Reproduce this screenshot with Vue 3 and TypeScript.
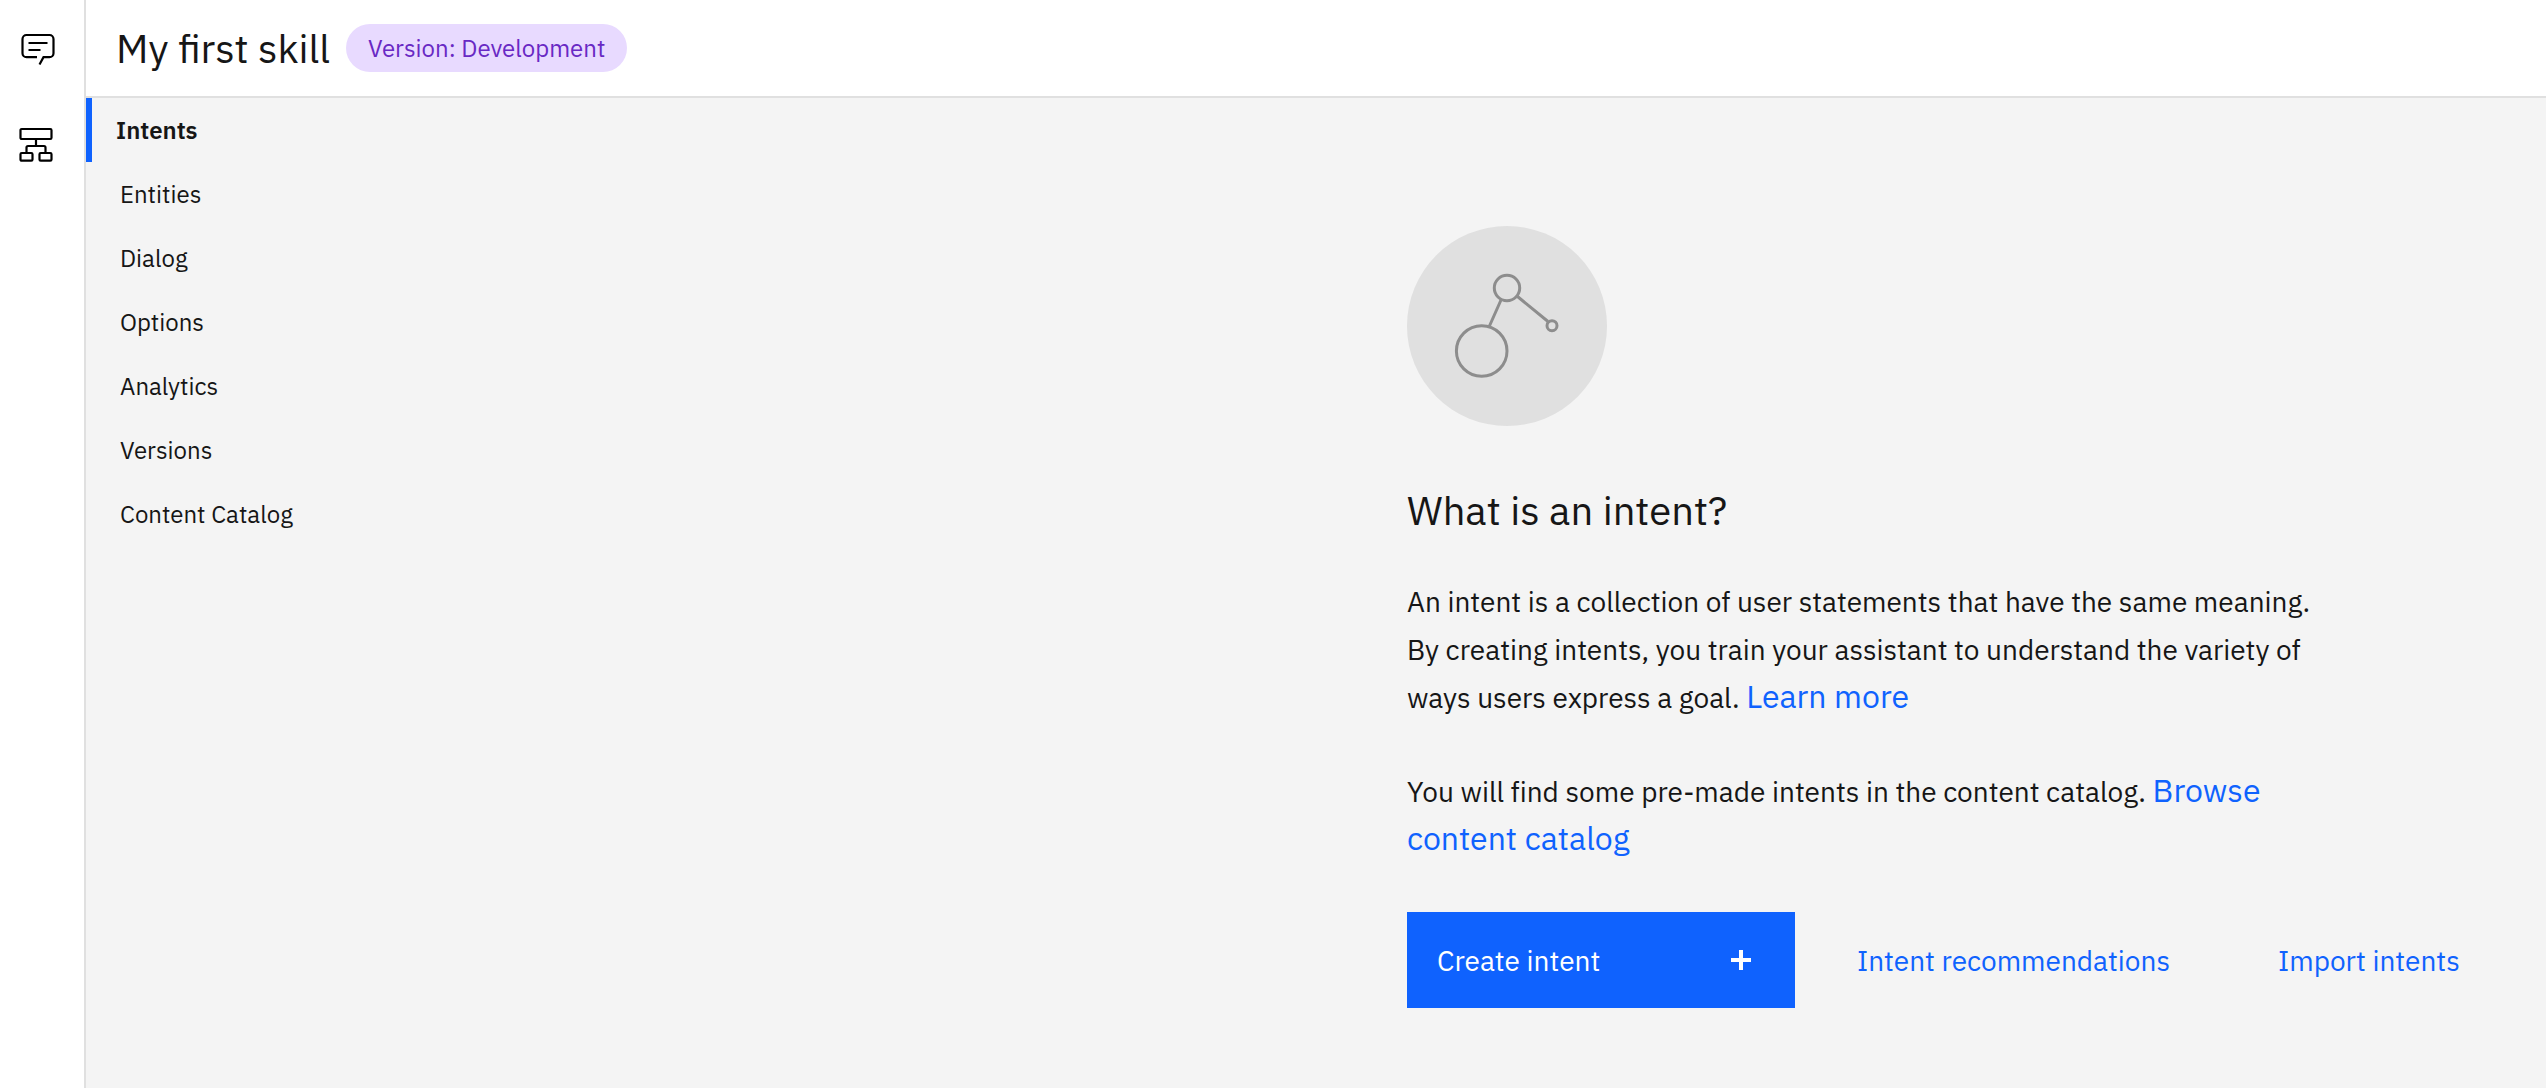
<script setup lang="ts">
import { ref } from 'vue'

const sections: string[] = [
  'Intents',
  'Entities',
  'Dialog',
  'Options',
  'Analytics',
  'Versions',
  'Content Catalog',
]
const active = ref<string>('Intents')
</script>

<template>
  <div class="shell">
    <nav class="rail" aria-label="Workspace">
      <a href="#assistants" class="rail-link" aria-label="Assistants">
        <svg viewBox="0 0 36 36" fill="none" stroke="#000" stroke-width="2.2">
          <path d="M17 25.200H6.500A4 4 0 0 1 2.500 21.200V7A4 4 0 0 1 6.500 3H29.500A4 4 0 0 1 33.500 7V21.200A4 4 0 0 1 29.500 25.200H23.500L19.500 32.500" />
          <path d="M8.500 11H27.500M8.500 18H20.500" />
        </svg>
      </a>
      <a href="#skills" class="rail-link skills" aria-label="Skills">
        <svg viewBox="0 0 36 36" fill="none" stroke="#000" stroke-width="2.2">
          <rect x="2.500" y="2" width="31" height="10" rx="1.200" />
          <path d="M18 12V19M8.500 26V20.500Q8.500 19 10 19H26Q27.500 19 27.500 20.500V26" />
          <rect x="2.500" y="26" width="12" height="7.700" rx="1.200" />
          <rect x="21.500" y="26" width="12" height="7.700" rx="1.200" />
        </svg>
      </a>
    </nav>

    <div class="workspace">
      <header class="header">
        <h1>My first skill</h1>
        <span class="tag">Version: Development</span>
      </header>

      <div class="body">
        <nav class="sections" aria-label="Skill sections">
          <a
            v-for="name in sections"
            :key="name"
            href="#"
            :class="{ active: name === active }"
            :aria-current="name === active ? 'page' : undefined"
            @click.prevent="active = name"
          >{{ name }}</a>
        </nav>

        <main class="intro">
          <svg class="art" viewBox="0 0 200 200" fill="none" stroke="#8d8d8d" stroke-width="3" aria-hidden="true">
            <circle cx="100" cy="100" r="100" fill="#e0e0e0" stroke="none" />
            <path d="M94 74L82 101M110.500 70.500L141 95.500" />
            <circle cx="100" cy="62" r="12.700" />
            <circle cx="74.700" cy="125" r="25.300" />
            <circle cx="145" cy="99.700" r="5" />
          </svg>
          <h2>What is an intent?</h2>
          <p>
            An intent is a collection of user statements that have the same meaning.
            By creating intents, you train your assistant to understand the variety of
            ways users express a goal. <a href="#learn">Learn more</a>
          </p>
          <p>
            You will find some pre-made intents in the content catalog.
            <a href="#catalog">Browse content catalog</a>
          </p>
          <div class="actions">
            <button type="button" class="primary">
              Create intent
              <svg viewBox="0 0 20 20" fill="#fff" aria-hidden="true">
                <path d="M8 0h4v8h8v4h-8v8H8v-8H0V8h8z" />
              </svg>
            </button>
            <button type="button" class="ghost">Intent recommendations</button>
            <button type="button" class="ghost">Import intents</button>
          </div>
        </main>
      </div>
    </div>
  </div>
</template>

<style>
body {
  background: #f4f4f4;
}
</style>

<style scoped>
.shell {
  display: flex;
  min-height: 100vh;
  font-family: 'IBM Plex Sans', 'Noto Sans', sans-serif;
  color: #161616;
}
.shell *,
.shell {
  box-sizing: border-box;
}
a {
  color: #0f62fe;
  text-decoration: none;
}
.rail {
  flex: none;
  width: 86px;
  padding-top: 32px;
  background: #fff;
  border-right: 2px solid #e0e0e0;
  display: flex;
  flex-direction: column;
  gap: 59px;
}
.rail-link {
  display: block;
  width: 36px;
  height: 36px;
  margin-left: 20px;
}
.rail-link.skills {
  margin-left: 18px;
}
.rail-link svg {
  display: block;
}
.workspace {
  flex: 1;
  min-width: 0;
}
.header {
  display: flex;
  align-items: center;
  gap: 16px;
  height: 98px;
  padding-left: 30px;
  background: #fff;
  border-bottom: 2px solid #e0e0e0;
}
h1,
h2 {
  margin: 0;
  font-size: 40px;
  line-height: 48px;
  font-weight: 400;
}
.tag {
  height: 48px;
  padding: 0 22px;
  border-radius: 24px;
  background: #e8daff;
  color: #6929c4;
  font-size: 24px;
  line-height: 48px;
}
.body {
  display: grid;
  grid-template-columns: 1321fr 1139fr;
}
.sections {
  display: flex;
  flex-direction: column;
}
.sections a {
  padding-left: 34px;
  color: #161616;
  font-size: 24px;
  line-height: 64px;
}
.sections a.active {
  padding-left: 24px;
  border-left: 6px solid #0f62fe;
  font-weight: 600;
}
.intro {
  padding: 128px 24px 80px 0;
}
.art {
  display: block;
  width: 200px;
  height: 200px;
}
h2 {
  margin-top: 60px;
}
p {
  max-width: 928px;
  margin: 46px 0 0;
  font-size: 28px;
  line-height: 48px;
  font-variant-ligatures: none;
}
h2 + p {
  margin-top: 44px;
}
p a {
  font-size: 32px;
  line-height: 40px;
}
.actions {
  display: flex;
  margin-top: 48px;
}
button {
  height: 96px;
  border: 0;
  font: inherit;
  font-size: 28px;
  cursor: pointer;
  white-space: nowrap;
}
.primary {
  display: flex;
  align-items: center;
  justify-content: space-between;
  width: 388px;
  margin-right: 8px;
  padding: 0 44px 0 30px;
  background: #0f62fe;
  color: #fff;
}
.primary svg {
  width: 20px;
  height: 20px;
}
.ghost {
  padding: 0 54px;
  background: transparent;
  color: #0f62fe;
}
</style>
